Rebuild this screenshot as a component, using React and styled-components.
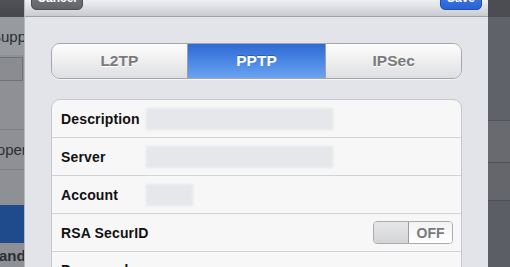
import React from "react";
import styled, { createGlobalStyle } from "styled-components";

const Global = createGlobalStyle`
  html, body { margin: 0; padding: 0; background: #5d5f66; }
  body { font-family: "Liberation Sans", Arial, sans-serif; }
`;

const Screen = styled.div`
  display: flex;
  width: 510px;
  height: 267px;
  overflow: hidden;
`;

// dimmed settings page behind the sheet
const Backdrop = styled.div`
  width: ${(p) => p.$w}px;
  flex: none;
  display: flex;
  flex-direction: column;
  background: ${(p) => p.$bg};
  overflow: hidden;
`;

const BackBar = styled.div`
  height: 17px;
  flex: none;
  background: linear-gradient(#4f5156, #45474c);
`;

const BackBand = styled.div`
  height: ${(p) => p.$h}px;
  flex: none;
  background: ${(p) => p.$bg || "transparent"};
  border-bottom: ${(p) => (p.$line ? "1px solid #7c7e83" : "none")};
  display: flex;
  align-items: center;
  box-sizing: border-box;
`;

const BackText = styled.span`
  font-size: 15px;
  font-weight: ${(p) => (p.$bold ? 700 : 400)};
  color: #2c2e33;
  white-space: nowrap;
  margin-left: ${(p) => p.$shift}px;
`;

const BackField = styled.div`
  width: 22px;
  height: 22px;
  border: 1px solid #6f7176;
  border-left: none;
  background: #8a8c91;
`;

const Sheet = styled.div`
  width: 463px;
  flex: none;
  display: flex;
  flex-direction: column;
  background: #e2e4e9;
  box-shadow: -1px 0 0 #b7b9be;
`;

const NavBar = styled.div`
  height: 17px;
  flex: none;
  box-sizing: border-box;
  display: flex;
  align-items: flex-end;
  justify-content: space-between;
  padding: 0 6px 7px 6px;
  background: linear-gradient(#eef0f3, #c9cbd0);
  border-bottom: 1px solid #9fa1a7;
`;

const NavButton = styled.div`
  width: ${(p) => p.$w}px;
  height: 28px;
  flex: none;
  box-sizing: border-box;
  padding-top: 8px;
  border-radius: 5px;
  border: 1px solid ${(p) => (p.$primary ? "#1d4fb0" : "#4c4e53")};
  background: ${(p) =>
    p.$primary
      ? "linear-gradient(#5d8fe6, #2961d6)"
      : "linear-gradient(#8a8c91, #606267)"};
  color: #fff;
  font-size: 12px;
  font-weight: 700;
  text-align: center;
  line-height: 14px;
  margin-bottom: -1px;
`;

const Body = styled.div`
  padding: 26px 26px 0 26px;
  display: flex;
  flex-direction: column;
  gap: 20px;
`;

const Segmented = styled.div`
  height: 36px;
  display: flex;
  border: 1px solid #a4a6ab;
  border-radius: 9px;
  overflow: hidden;
  box-sizing: border-box;
  box-shadow: 0 1px 0 #f4f5f7;
`;

const Segment = styled.div`
  flex: ${(p) => p.$w};
  display: flex;
  align-items: center;
  justify-content: center;
  font-size: 15.5px;
  font-weight: 700;
  color: ${(p) => (p.$active ? "#ffffff" : "#7a7a7c")};
  background: ${(p) =>
    p.$active
      ? "linear-gradient(#2f6ad3, #4a86e4 50%, #6aa3f0)"
      : "linear-gradient(#fdfdfd, #ededee 55%, #dedfe1)"};
  text-shadow: ${(p) => (p.$active ? "0 -1px 0 rgba(0,0,0,0.25)" : "0 1px 0 #fff")};
  & + & {
    border-left: 1px solid #9ea0a5;
  }
`;

const Card = styled.div`
  background: #f7f7f7;
  border: 1px solid #c6c8cc;
  border-radius: 9px 9px 0 0;
`;

const Row = styled.div`
  height: 38px;
  box-sizing: border-box;
  display: flex;
  align-items: ${(p) => (p.$top ? "flex-start" : "center")};
  padding: ${(p) => (p.$top ? "10px" : "0")} 8px 0 9px;
  border-bottom: 1px solid #d2d3d6;
`;

const Label = styled.div`
  width: 85px;
  flex: none;
  font-size: 14px;
  font-weight: 700;
  color: #111;
  letter-spacing: 0.15px;
  white-space: nowrap;
`;

const Blur = styled.div`
  width: ${(p) => p.$w}px;
  height: 22px;
  background: #e6e7ea;
  filter: blur(1px);
`;

const Dots = styled.div`
  margin-left: 5px;
  margin-top: 3px;
  font-size: 10px;
  letter-spacing: 0.5px;
  color: #3d5a94;
`;

const Toggle = styled.div`
  margin-left: auto;
  width: 80px;
  height: 23px;
  box-sizing: border-box;
  display: flex;
  border: 1px solid #a9abaf;
  border-radius: 4px;
  overflow: hidden;
  background: #fdfdfd;
`;

const Knob = styled.div`
  width: 34px;
  flex: none;
  background: linear-gradient(#e6e6e7, #d3d4d6);
  border-right: 1px solid #9b9da1;
`;

const ToggleText = styled.div`
  flex: 1;
  display: flex;
  align-items: center;
  justify-content: center;
  font-size: 14px;
  font-weight: 700;
  color: #7a7a7c;
  background: linear-gradient(#f2f2f2, #ffffff);
`;

const RightBand = styled.div`
  height: ${(p) => p.$h}px;
  flex: none;
  background: ${(p) => p.$bg};
  border-bottom: ${(p) => (p.$line ? "1px solid #4f5157" : "none")};
  box-sizing: border-box;
`;

export default function App() {
  return (
    <>
      <Global />
      <Screen>
        <Backdrop $w={25} $bg="#8e9095">
          <BackBar />
          <BackBand $h={38} $bg="#979a9e">
            <BackText $shift={-9}>Supp</BackText>
          </BackBand>
          <BackBand $h={28}>
            <BackField />
          </BackBand>
          <BackBand $h={47} $line />
          <BackBand $h={40} $line>
            <BackText $shift={-14}>Upper</BackText>
          </BackBand>
          <BackBand $h={35} />
          <BackBand $h={38} $bg="#1f4b8c" />
          <BackBand $h={24}>
            <BackText $shift={-16} $bold>Standard</BackText>
          </BackBand>
        </Backdrop>

        <Sheet>
          <NavBar>
            <NavButton $w={52}>Cancel</NavButton>
            <NavButton $w={42} $primary>Save</NavButton>
          </NavBar>
          <Body>
            <Segmented>
              <Segment $w={136}>L2TP</Segment>
              <Segment $w={139} $active>PPTP</Segment>
              <Segment $w={136}>IPSec</Segment>
            </Segmented>
            <Card>
              <Row>
                <Label>Description</Label>
                <Blur $w={187} />
              </Row>
              <Row>
                <Label>Server</Label>
                <Blur $w={187} />
              </Row>
              <Row>
                <Label>Account</Label>
                <Blur $w={47} />
              </Row>
              <Row>
                <Label>RSA SecurID</Label>
                <Toggle>
                  <Knob />
                  <ToggleText>OFF</ToggleText>
                </Toggle>
              </Row>
              <Row $top>
                <Label>Password</Label>
                <Dots>●●●●●●●●●●</Dots>
              </Row>
            </Card>
          </Body>
        </Sheet>

        <Backdrop $w={22} $bg="#5e6067">
          <RightBand $h={17} $bg="#4b4d52" />
          <RightBand $h={104} $bg="#606269" $line />
          <RightBand $h={42} $bg="#686a70" $line />
          <RightBand $h={38} $bg="#64666c" $line />
          <RightBand $h={66} $bg="#5c5e65" />
        </Backdrop>
      </Screen>
    </>
  );
}
